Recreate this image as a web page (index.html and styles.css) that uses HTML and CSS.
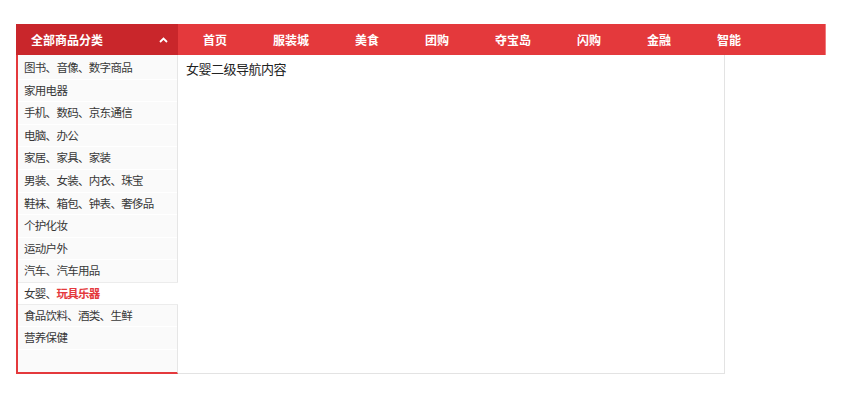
FILE: index.html
```html
<!DOCTYPE html>
<html lang="zh-CN">
<head>
<meta charset="utf-8">
<title>全部商品分类</title>
<link rel="stylesheet" href="styles.css">
</head>
<body>
<div class="wrap">
  <div class="cat">
    <div class="cat-head">
      <span class="cat-title">全部商品分类</span>
      <svg class="caret" width="9" height="6" viewBox="0 0 9 6"><path d="M1 5 L4.5 1.5 L8 5" fill="none" stroke="#fff" stroke-width="1.8"/></svg>
    </div>
    <ul class="cat-list">
      <li>图书、音像、数字商品</li>
      <li>家用电器</li>
      <li>手机、数码、京东通信</li>
      <li>电脑、办公</li>
      <li>家居、家具、家装</li>
      <li>男装、女装、内衣、珠宝</li>
      <li>鞋袜、箱包、钟表、奢侈品</li>
      <li>个护化妆</li>
      <li>运动户外</li>
      <li>汽车、汽车用品</li>
      <li class="active">女婴、<b>玩具乐器</b></li>
      <li>食品饮料、酒类、生鲜</li>
      <li>营养保健</li>
    </ul>
  </div>
  <div class="main">
    <ul class="nav">
      <li>首页</li>
      <li>服装城</li>
      <li>美食</li>
      <li>团购</li>
      <li>夺宝岛</li>
      <li>闪购</li>
      <li>金融</li>
      <li>智能</li>
    </ul>
    <div class="panel">女婴二级导航内容</div>
  </div>
</div>
</body>
</html>
```
FILE: styles.css
```css
* { box-sizing: border-box; }
html, body { margin: 0; padding: 0; background: #fff; }
body {
  font-family: "Noto Sans CJK SC", "Liberation Sans", sans-serif;
  font-size: 12px;
  color: #333;
}
ul { list-style: none; margin: 0; padding: 0; }
.wrap {
  display: flex;
  align-items: flex-start;
  padding: 24px 0 0 16px;
}
.cat {
  width: 162px;
  flex: none;
}
.cat-head {
  height: 31px;
  background: #c9262b;
  color: #fff;
  display: flex;
  align-items: center;
  justify-content: space-between;
  padding: 0 10px 0 15px;
}
.cat-title {
  font-weight: bold;
  font-size: 12px;
  line-height: 16px;
}
.caret { display: block; margin-top: 0; }
.cat-list {
  height: 319px;
  background: #fafafa;
  border-left: 2px solid #e4393c;
  border-bottom: 2px solid #e4393c;
  border-right: 1px solid #e6e6e6;
  padding-top: 2px;
}
.cat-list li {
  height: 22.6px;
  line-height: 21.6px;
  padding-left: 6px;
  border-bottom: 1px solid #fff;
  font-size: 11.5px;
  letter-spacing: -0.7px;
  color: #383838;
  white-space: nowrap;
}
.cat-list li.active {
  background: #fff;
  margin-right: -1px;
  border-top: 1px solid #ececec;
  border-bottom: 1px solid #ececec;
  margin-top: -1px;
}
.cat-list li.active b { color: #e4393c; font-weight: bold; }
.main { flex: none; width: 648px; }
.nav {
  height: 31px;
  background: #e4393c;
  border-right: 1px solid #f07a7c;
  display: flex;
  align-items: center;
  padding-left: 2px;
}
.nav li {
  padding: 0 23px;
  color: #fff;
  font-weight: bold;
  font-size: 12px;
  line-height: 16px;
}
.panel {
  width: 547px;
  height: 319px;
  border-right: 1px solid #e3e3e3;
  border-bottom: 1px solid #e3e3e3;
  padding: 5px 8px;
  font-size: 13px;
  letter-spacing: -0.5px;
  line-height: 18px;
  color: #222;
}
```
